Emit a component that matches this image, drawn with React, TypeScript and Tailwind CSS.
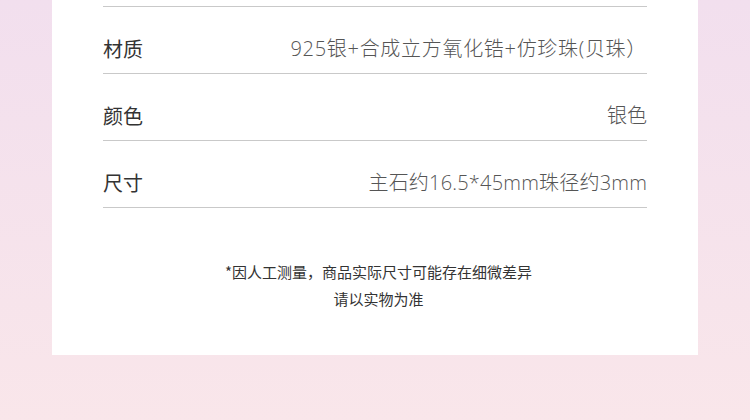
const specs = [
  { label: '材质', value: '925银+合成立方氧化锆+仿珍珠(贝珠）', track: 'tracking-[0.7px]' },
  { label: '颜色', value: '银色', track: '' },
  { label: '尺寸', value: '主石约16.5*45mm珠径约3mm', track: 'tracking-[0.2px]' },
];

export default function App() {
  return (
    <div
      className="min-h-[420px] w-[750px] overflow-hidden bg-gradient-to-b from-[#f2dfee] to-[#f9e6ea] px-[52px]"
      style={{ fontFamily: '"Noto Sans CJK SC", "Noto Sans", sans-serif' }}
    >
      <div className="bg-white px-[51px] pb-[43px]">
        <div className="h-[7px] border-b border-[#c9c9c9]" />
        {specs.map((s) => (
          <div
            key={s.label}
            className="flex h-[67px] items-end justify-between border-b border-[#c9c9c9] pb-[14px]"
          >
            <span className="text-[20px] leading-[20px] text-[#333333]">{s.label}</span>
            <span
              className={`font-['Open_Sans','Noto_Sans_CJK_SC',sans-serif] text-[20px] leading-[20px] font-light text-[#555555] ${s.track}`}
            >
              {s.value}
            </span>
          </div>
        ))}
        <div className="mt-[50px] pl-[7px] text-center text-[15px] leading-[27px] text-[#333333]">
          <p>*因人工测量，商品实际尺寸可能存在细微差异</p>
          <p>请以实物为准</p>
        </div>
      </div>
    </div>
  );
}
